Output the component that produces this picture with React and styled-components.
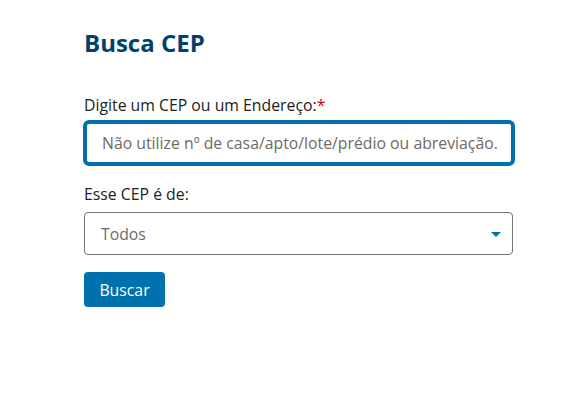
import React from "react";
import styled, { createGlobalStyle } from "styled-components";

const GlobalStyle = createGlobalStyle`
  html, body {
    margin: 0;
    padding: 0;
    background: #fff;
  }
  body {
    font-family: "Open Sans", "Noto Sans", sans-serif;
    color: #222;
  }
  * {
    box-sizing: border-box;
  }
`;

const Page = styled.div`
  width: 580px;
  height: 403px;
  padding: 25px 0 0 84px;
`;

const Title = styled.h1`
  margin: 0 0 34px;
  font-size: 24px;
  line-height: 36px;
  font-weight: 700;
  color: #00416e;
`;

const Form = styled.form`
  width: 429px;
  display: flex;
  flex-direction: column;
`;

const Field = styled.div`
  display: flex;
  flex-direction: column;
  margin-bottom: ${(p) => p.$gap || 18}px;
`;

const Label = styled.label`
  font-size: 15.8px;
  line-height: 20px;
  margin-bottom: 8px;
  color: #222;
`;

const Required = styled.span`
  color: #d40000;
`;

/* focused look: thick blue ring slightly outside the field */
const TextInput = styled.input`
  width: 432px;
  height: 46px;
  margin: -3px 0 0 -1px;
  padding: 0 4px 0 15px;
  border: 4px solid #0071ad;
  border-radius: 6px;
  font-family: inherit;
  font-size: 15.8px;
  color: #333;
  outline: none;
  &::placeholder {
    color: #6f6a66;
  }
`;

const SelectBox = styled.div`
  position: relative;
  height: 43px;
  border: 1px solid #7a726c;
  border-radius: 4px;
  display: flex;
  align-items: center;
  padding: 0 16px;
  font-size: 15.8px;
  color: #6f6a66;
`;

const Caret = styled.span`
  position: absolute;
  right: 11px;
  top: 19px;
  width: 0;
  height: 0;
  border-left: 5px solid transparent;
  border-right: 5px solid transparent;
  border-top: 5px solid #0071ad;
`;

const Button = styled.button`
  align-self: flex-start;
  width: 81px;
  height: 35px;
  border: none;
  border-radius: 4px;
  background: #0071ad;
  color: #fff;
  font-family: inherit;
  font-size: 15.8px;
  cursor: pointer;
`;

export default function App() {
  return (
    <Page>
      <GlobalStyle />
      <Title>Busca CEP</Title>
      <Form onSubmit={(e) => e.preventDefault()}>
        <Field>
          <Label htmlFor="endereco">
            Digite um CEP ou um Endereço:<Required>*</Required>
          </Label>
          <TextInput
            id="endereco"
            placeholder="Não utilize nº de casa/apto/lote/prédio ou abreviação."
          />
        </Field>
        <Field $gap={17}>
          <Label>Esse CEP é de:</Label>
          <SelectBox>
            Todos
            <Caret />
          </SelectBox>
        </Field>
        <Button type="submit">Buscar</Button>
      </Form>
    </Page>
  );
}
